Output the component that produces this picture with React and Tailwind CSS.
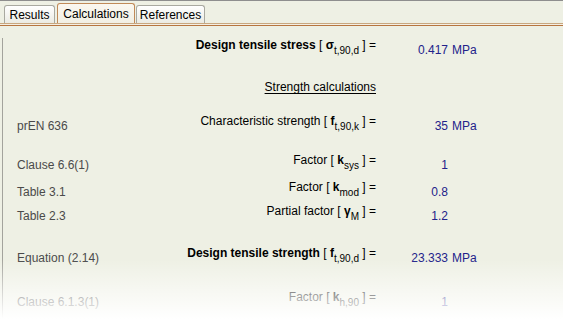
import React from "react";

function Sym({ s, sub }) {
  return (
    <>
      <span className="font-bold">{s}</span>
      <span className="relative top-[5px] text-[10px]">{sub}</span>
    </>
  );
}

function Row({ cls, left, label, value, unit }) {
  return (
    <div className={"flex items-start h-[19px] " + cls}>
      <div className="w-[150px] pl-[14px] pt-[5px] text-[#4a4a4a] whitespace-nowrap">{left}</div>
      <div className="w-[223px] text-right whitespace-nowrap text-black">{label}</div>
      <div className="w-[72px] pt-[5px] text-right text-[#22228a] whitespace-nowrap">{value}</div>
      <div className="pl-[4px] pt-[5px] text-[#22228a] whitespace-nowrap">{unit}</div>
    </div>
  );
}

function Tab({ label, active, w }) {
  if (active) {
    return (
      <div
        className={
          "h-[20px] flex items-center justify-center pt-[1px] rounded-t-[3px] border border-b-0 border-[#c08a58] bg-linear-to-b from-[#fbf8f0] to-[#f1efe4] text-black " +
          w
        }
      >
        {label}
      </div>
    );
  }
  return (
    <div
      className={
        "h-[18px] flex items-center justify-center pt-[1px] rounded-t-[3px] border border-b-0 border-[#a9a9a0] bg-linear-to-b from-[#ffffff] to-[#ebebe3] text-black " +
        w
      }
    >
      {label}
    </div>
  );
}

export default function App() {
  return (
    <div className="relative w-[563px] h-[319px] overflow-hidden bg-[#eef0e4] border-t border-[#8e8e8e] font-['Liberation_Sans',Arial,sans-serif] text-[12px] leading-[14px]">
      <div className="flex items-end h-[22px] pl-[4px]">
        <Tab label="Results" w="w-[51px]" />
        <div className="w-[2px]" />
        <Tab label="Calculations" active w="w-[78px]" />
        <div className="w-[1px]" />
        <Tab label="References" w="w-[69px]" />
      </div>
      <div className="h-px bg-[#c9a77f]" />
      <div className="h-px bg-[#f3efe4]" />
      <div className="h-px bg-[#b7753f]" />
      <div className="ml-[2px] h-[300px] border-l border-[#a3a39c]">
        <Row
          cls="mt-[12px]"
          label={
            <>
              <span className="font-bold">Design tensile stress</span> [ <Sym s="σ" sub="t,90,d" /> ] =
            </>
          }
          value="0.417"
          unit="MPa"
        />
        <div className="flex mt-[23px] h-[14px]">
          <div className="w-[150px]" />
          <div className="w-[223px] text-right text-black">
            <span className="underline underline-offset-[2px]">Strength calculations</span>
          </div>
        </div>
        <Row
          cls="mt-[20px]"
          left="prEN 636"
          label={
            <>
              Characteristic strength [ <Sym s="f" sub="t,90,k" /> ] =
            </>
          }
          value="35"
          unit="MPa"
        />
        <Row
          cls="mt-[20px]"
          left="Clause 6.6(1)"
          label={
            <>
              Factor [ <Sym s="k" sub="sys" /> ] =
            </>
          }
          value="1"
        />
        <Row
          cls="mt-[8px]"
          left="Table 3.1"
          label={
            <>
              Factor [ <Sym s="k" sub="mod" /> ] =
            </>
          }
          value="0.8"
        />
        <Row
          cls="mt-[5px]"
          left="Table 2.3"
          label={
            <>
              Partial factor [ <Sym s="γ" sub="M" /> ] =
            </>
          }
          value="1.2"
        />
        <Row
          cls="mt-[23px]"
          left="Equation (2.14)"
          label={
            <>
              <span className="font-bold">Design tensile strength</span> [ <Sym s="f" sub="t,90,d" /> ] =
            </>
          }
          value="23.333"
          unit="MPa"
        />
        <Row
          cls="mt-[25px]"
          left="Clause 6.1.3(1)"
          label={
            <>
              Factor [ <Sym s="k" sub="h,90" /> ] =
            </>
          }
          value="1"
        />
      </div>
      <div className="pointer-events-none absolute left-0 right-0 bottom-0 h-[60px] bg-linear-to-b from-white/0 to-white" />
    </div>
  );
}
